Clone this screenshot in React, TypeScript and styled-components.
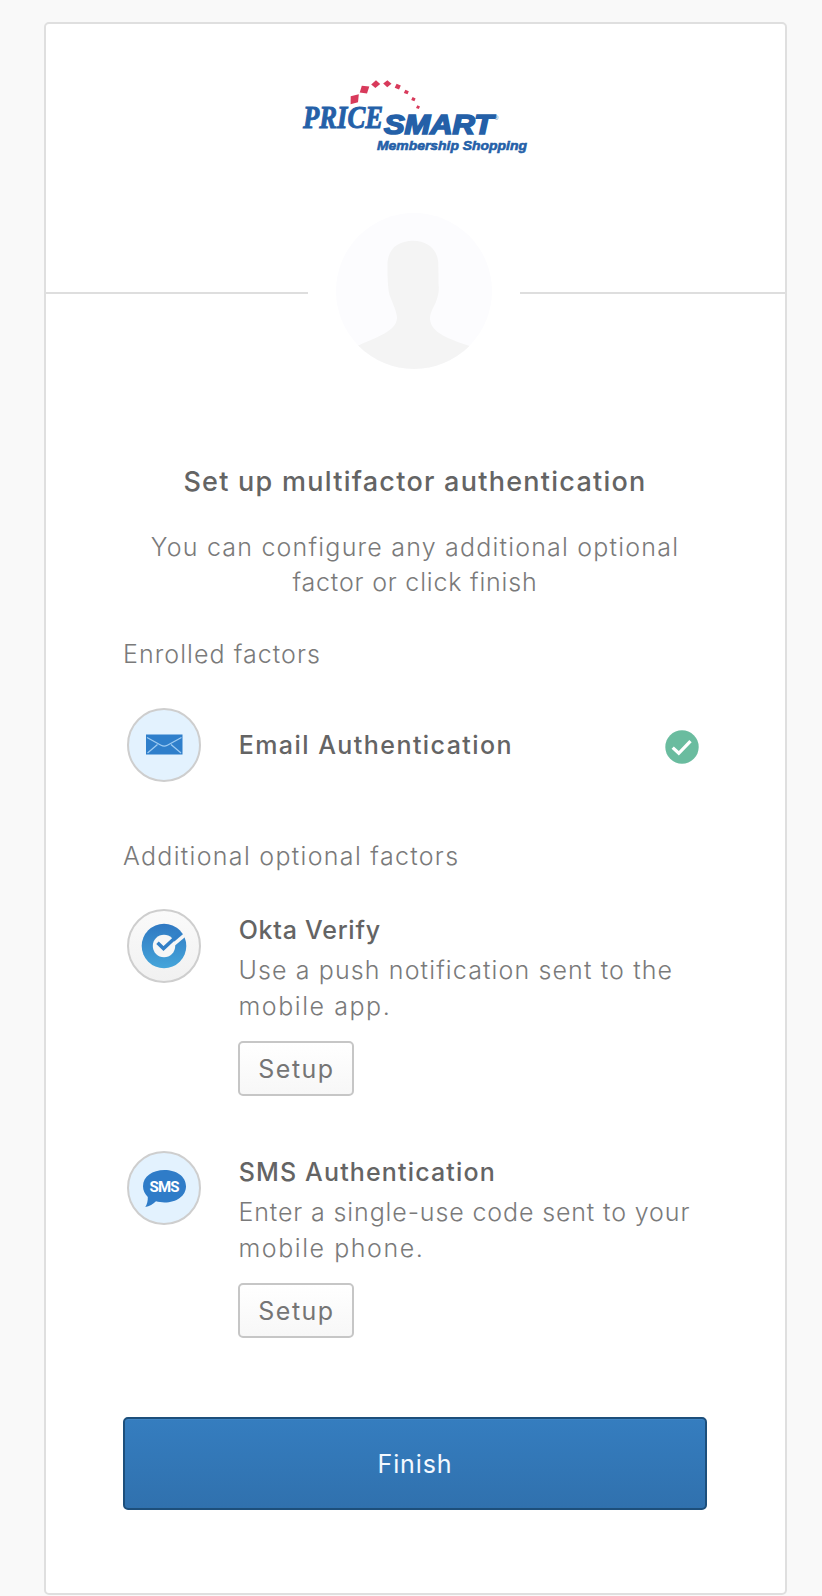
import React from 'react';
import styled, { createGlobalStyle } from 'styled-components';

const GlobalStyle = createGlobalStyle`
  * { box-sizing: border-box; }
  body {
    margin: 0;
    background: #f9f9f9;
    font-family: Inter, 'Liberation Sans', sans-serif;
    font-size: 25px;
    color: #7a7a7a;
  }
`;

const Page = styled.main`
  display: flex;
  justify-content: flex-start;
  min-height: 1596px;
  padding: 22px 0 1px 44px;
`;

const Card = styled.section`
  width: 743px;
  height: 1573px;
  background: #fff;
  border: 2px solid #dfdfdf;
  border-radius: 5px;
`;

const Brand = styled.header`
  display: flex;
  justify-content: center;
  height: 189px;
  padding-top: 46px;
`;

const AvatarRow = styled.div`
  display: flex;
  align-items: center;
  justify-content: space-between;
`;

const Rule = styled.div<{ $width: number }>`
  width: ${(p) => p.$width}px;
  height: 2px;
  margin-top: 3px;
  background: #dedede;
`;

const Content = styled.div`
  display: flex;
  flex-direction: column;
  padding: 95px 78px 0 77px;
`;

const Line = styled.span<{ $track: number }>`
  display: block;
  white-space: nowrap;
  letter-spacing: ${(p) => p.$track}px;
`;

const Title = styled.h1`
  margin: 0;
  font-size: 27px;
  font-weight: 500;
  line-height: 36px;
  text-align: center;
  color: #646464;
`;

const Subtitle = styled.p`
  margin: 30px 0 0;
  font-weight: 300;
  line-height: 35px;
  text-align: center;
`;

const SectionLabel = styled.h2<{ $top: number }>`
  margin: ${(p) => p.$top}px 0 0;
  font-size: 25px;
  font-weight: 300;
  line-height: 36px;
`;

const FactorRow = styled.div<{ $top: number; $center?: boolean }>`
  display: flex;
  gap: 37px;
  align-items: ${(p) => (p.$center ? 'center' : 'flex-start')};
  margin-top: ${(p) => p.$top}px;
  padding: 0 7px 0 4px;
`;

const FactorIcon = styled.div<{ $plain?: boolean }>`
  display: flex;
  flex: none;
  width: 74px;
  height: 74px;
  border: 2px solid #cecece;
  border-radius: 50%;
  background: ${(p) => (p.$plain ? 'linear-gradient(#fafafa, #f1f1f1)' : '#e3f2fe')};
`;

const FactorBody = styled.div`
  flex: 1;
  padding-top: 3px;
`;

const FactorName = styled.h3`
  flex: 1;
  margin: 0;
  padding-left: 0.7px;
  font-size: 25px;
  font-weight: 500;
  line-height: 36px;
  color: #646464;
`;

const Description = styled.p`
  margin: 4px 0 17px;
  padding-left: 0.5px;
  font-weight: 300;
  line-height: 36px;
`;

const SetupButton = styled.button`
  display: block;
  width: 116px;
  height: 55px;
  padding: 0 0 0 1px;
  border: 2px solid #c6c6c6;
  border-radius: 5px;
  background: linear-gradient(#fff, #f7f7f7);
  font: 400 25px/36px Inter, sans-serif;
  color: #757575;
  text-align: center;
`;

const FinishButton = styled.button`
  height: 93px;
  margin-top: 79px;
  padding: 0;
  border: 2px solid #1d4f7b;
  border-radius: 5px;
  background: linear-gradient(#357dbf, #3071ae);
  box-shadow: inset 0 1px 0 #4187c6;
  font: 400 25px/36px Inter, sans-serif;
  color: #f3f9ff;
  text-align: center;
`;

function Logo() {
  return (
    <svg width="251" height="95" viewBox="0 0 251 95" role="img">
      <g fill="#d83a5b">
        <path d="M60.7 26.3L68.8 24.2 68 32.2 60.6 34.2z" />
        <path d="M71.8 15.8L79.3 16.6 77 23.6 69.7 22.6z" />
        <path d="M86 10.2L90.2 14 85.4 18 81.2 14.4z" />
        <path d="M97.4 10.3L101.5 13.8 97.2 17.2 93.2 13.5z" />
        <path d="M106.6 13.8L110.8 15.4 109 19.6 104.7 17.8z" />
        <path d="M115.4 19.7L118.8 21.2 117.5 24.3 113.8 23z" />
        <path d="M122.6 26.9L125.6 28.4 124.4 31.2 121.2 30z" />
        <path d="M127.4 35.2L130 36.6 128.8 38.9 126 38z" />
      </g>
      <g fill="#2460a8" stroke="#2460a8" fontStyle="italic" fontWeight="700">
        <text x="13" y="58.3" fontFamily="Liberation Serif, serif" fontSize="32.5" strokeWidth="1" textLength="80" lengthAdjust="spacingAndGlyphs">PRICE</text>
        <text x="94" y="64" fontFamily="Liberation Sans, sans-serif" fontSize="27" strokeWidth="1.700" textLength="109" lengthAdjust="spacingAndGlyphs">SMART</text>
        <text x="87" y="80.3" fontFamily="Liberation Sans, sans-serif" fontSize="13" strokeWidth="0.6" textLength="150" lengthAdjust="spacingAndGlyphs">Membership Shopping</text>
        <text x="204" y="50" fontFamily="Liberation Sans, sans-serif" fontSize="6" strokeWidth="0" opacity="0.7">®</text>
      </g>
    </svg>
  );
}

function Avatar() {
  return (
    <svg width="156" height="156" viewBox="0 0 156 156">
      <defs>
        <clipPath id="avatar-clip"><circle cx="78" cy="78" r="78" /></clipPath>
      </defs>
      <g clipPath="url(#avatar-clip)">
        <rect width="156" height="156" fill="#fcfcfe" />
        <path
          fill="#f4f4f4"
          d="M77 27.700C91 27.700 102 36 102.300 51L102.600 72C103.400 76 102.400 83 99.500 90C96 97 94 101 94 106C95 120 113 126 135 133.500V156H20V133.500C39 125 61 118 61 105C61 99 57 91 53.500 82C51.500 74 51.500 60 51.500 50C52.500 36 61 28 77 27.700Z"
        />
      </g>
    </svg>
  );
}

function EmailIcon() {
  return (
    <svg width="70" height="70" viewBox="0 0 70 70">
      <rect x="17" y="24.500" width="36.500" height="20" fill="#2f7fcb" />
      <g fill="none" stroke="#9dcbf2" strokeWidth="1.300">
        <path d="M18 27.500L32 35.300Q35.200 37 38.400 35.300L52.500 27.500" />
        <path d="M18.500 43L28.500 34.500M52 43L42 34.500" />
      </g>
    </svg>
  );
}

function OktaIcon() {
  return (
    <svg width="70" height="70" viewBox="0 0 70 70">
      <defs>
        <linearGradient id="okta-blue" x1="0" y1="0" x2="0" y2="1">
          <stop offset="0" stopColor="#2f78c2" />
          <stop offset="1" stopColor="#45a5da" />
        </linearGradient>
      </defs>
      <circle cx="35" cy="35" r="22.300" fill="url(#okta-blue)" />
      <circle cx="35" cy="35" r="11.200" fill="#f6f6f6" />
      <path d="M38 39L56.500 23.300" stroke="#f6f6f6" strokeWidth="3.600" />
      <path d="M28.500 31.800L34.500 37.500L51.500 21.800" fill="none" stroke="#327fc7" strokeWidth="3.600" />
    </svg>
  );
}

function SmsIcon() {
  return (
    <svg width="70" height="70" viewBox="0 0 70 70">
      <path
        fill="#2f7cc8"
        d="M35.500 17C47.500 17 57 23.500 57 33.300C57 43 47.500 49.500 35.500 49.500C32.500 49.500 29.500 49 27 48.300C24 51 20.500 53.500 16.300 54C18 51.500 19 47.500 18.800 44C15.800 41 14 37.500 14 33.300C14 23.500 23.500 17 35.500 17Z"
      />
      <text x="20.500" y="38.800" fontFamily="Roboto, sans-serif" fontWeight="700" fontSize="15" fill="#fff" textLength="30" lengthAdjust="spacing">SMS</text>
    </svg>
  );
}

function CheckIcon() {
  return (
    <svg width="34" height="34" viewBox="0 0 34 34">
      <circle cx="17" cy="17" r="16.700" fill="#6abc9f" />
      <path d="M7.700 17.600L13.800 23.300L25.500 11.200" fill="none" stroke="#fff" strokeWidth="3.300" />
    </svg>
  );
}

const CheckSlot = styled.div`
  display: flex;
  padding: 3px 1px 0 0;
`;

type FactorProps = {
  top: number;
  icon: React.ReactNode;
  plain?: boolean;
  name: [string, number];
  lines: [string, number][];
};

function OptionalFactor({ top, icon, plain, name, lines }: FactorProps) {
  return (
    <FactorRow $top={top}>
      <FactorIcon $plain={plain}>{icon}</FactorIcon>
      <FactorBody>
        <FactorName><Line $track={name[1]}>{name[0]}</Line></FactorName>
        <Description>
          {lines.map(([text, track]) => <Line key={text} $track={track}>{text}</Line>)}
        </Description>
        <SetupButton><Line $track={1.5}>Setup</Line></SetupButton>
      </FactorBody>
    </FactorRow>
  );
}

export default function App() {
  return (
    <>
      <GlobalStyle />
      <Page>
        <Card>
          <Brand><Logo /></Brand>
          <AvatarRow>
            <Rule $width={262} />
            <Avatar />
            <Rule $width={265} />
          </AvatarRow>
          <Content>
            <Title><Line $track={1.26}>Set up multifactor authentication</Line></Title>
            <Subtitle>
              <Line $track={1.2}>You can configure any additional optional</Line>
              <Line $track={0.8}>factor or click finish</Line>
            </Subtitle>
            <SectionLabel $top={36}><Line $track={1.05}>Enrolled factors</Line></SectionLabel>
            <FactorRow $top={36} $center>
              <FactorIcon><EmailIcon /></FactorIcon>
              <FactorName><Line $track={1.45}>Email Authentication</Line></FactorName>
              <CheckSlot><CheckIcon /></CheckSlot>
            </FactorRow>
            <SectionLabel $top={56}><Line $track={1.3}>Additional optional factors</Line></SectionLabel>
            <OptionalFactor
              top={35}
              plain
              icon={<OktaIcon />}
              name={['Okta Verify', 0.75]}
              lines={[['Use a push notification sent to the', 1.12], ['mobile app.', 1.55]]}
            />
            <OptionalFactor
              top={55}
              icon={<SmsIcon />}
              name={['SMS Authentication', 1.15]}
              lines={[['Enter a single-use code sent to your', 0.87], ['mobile phone.', 1.55]]}
            />
            <FinishButton><Line $track={0.9}>Finish</Line></FinishButton>
          </Content>
        </Card>
      </Page>
    </>
  );
}
